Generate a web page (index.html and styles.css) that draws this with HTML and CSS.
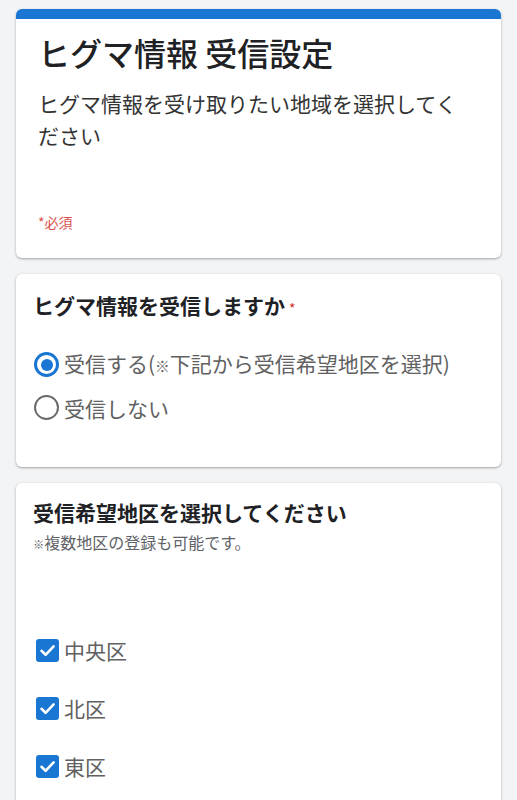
FILE: index.html
```html
<!DOCTYPE html>
<html lang="ja">
<head>
  <meta charset="UTF-8">
  <meta name="viewport" content="width=device-width, initial-scale=1.0">
  <title>ヒグマ情報 受信設定</title>
  <link rel="stylesheet" href="styles.css">
</head>
<body>
  <!-- Header card -->
  <div class="card card-head">
    <div class="head-bar"></div>
    <div class="head-body">
      <h1>ヒグマ情報 受信設定</h1>
      <p class="desc">ヒグマ情報を受け取りたい地域を選択してください</p>
      <p class="required-note">*必須</p>
    </div>
  </div>

  <!-- Receive yes / no -->
  <div class="card card-question">
    <h2>ヒグマ情報を受信しますか<span class="req">*</span></h2>
    <div class="options">
      <label class="radio-row">
        <span class="radio checked"></span>
        <span class="opt-text">受信する(<span class="mark">※</span>下記から受信希望地区を選択)</span>
      </label>
      <label class="radio-row">
        <span class="radio"></span>
        <span class="opt-text">受信しない</span>
      </label>
    </div>
  </div>

  <!-- Area selection -->
  <div class="card card-areas">
    <h2>受信希望地区を選択してください</h2>
    <p class="sub"><span class="mark">※</span>複数地区の登録も可能です。</p>
    <div class="checks">
      <label class="check-row">
        <svg class="check" viewBox="0 0 23 23" width="23" height="23"><rect width="23" height="23" rx="3" fill="#1976d2"/><polyline points="5.5,11.8 9.6,15.8 17.6,7.4" fill="none" stroke="#fff" stroke-width="2.6" stroke-linecap="round" stroke-linejoin="round"/></svg>
        <span class="opt-text">中央区</span>
      </label>
      <label class="check-row">
        <svg class="check" viewBox="0 0 23 23" width="23" height="23"><rect width="23" height="23" rx="3" fill="#1976d2"/><polyline points="5.5,11.8 9.6,15.8 17.6,7.4" fill="none" stroke="#fff" stroke-width="2.6" stroke-linecap="round" stroke-linejoin="round"/></svg>
        <span class="opt-text">北区</span>
      </label>
      <label class="check-row">
        <svg class="check" viewBox="0 0 23 23" width="23" height="23"><rect width="23" height="23" rx="3" fill="#1976d2"/><polyline points="5.5,11.8 9.6,15.8 17.6,7.4" fill="none" stroke="#fff" stroke-width="2.6" stroke-linecap="round" stroke-linejoin="round"/></svg>
        <span class="opt-text">東区</span>
      </label>
    </div>
  </div>
</body>
</html>
```

FILE: styles.css
```css
/* Global Styles */
* {
  margin: 0;
  padding: 0;
  box-sizing: border-box;
}

body {
  font-family: "Noto Sans CJK JP", "Noto Sans", sans-serif;
  background-color: #f3f4f6;
  color: #202124;
  padding: 9px 16px 20px;
}

.card {
  background: #fff;
  border-radius: 6px;
  box-shadow: 0 1px 3px rgba(0, 0, 0, 0.28), 0 1px 1px rgba(0, 0, 0, 0.08);
  margin-bottom: 16px;
  overflow: hidden;
}

/* Header card */
.head-bar {
  height: 10px;
  background-color: #1976d2;
}

.head-body {
  padding: 13px 26px 26px 22px;
}

h1 {
  font-size: 32px;
  font-weight: 500;
  line-height: 40px;
  color: #202124;
}

.desc {
  margin-top: 15px;
  font-size: 21px;
  line-height: 32px;
  color: #333;
}

.required-note {
  margin-top: 61px;
  font-size: 14px;
  line-height: 20px;
  color: #d9534f;
}

/* Question cards */
h2 {
  font-size: 21px;
  font-weight: 700;
  line-height: 30px;
  color: #202124;
}

.req {
  font-size: 14px;
  font-weight: 400;
  color: #d93025;
  margin-left: 4px;
}

.mark {
  font-size: 0.7em;
}

.card-question {
  padding: 16px 17px 38px;
}

.options {
  margin-top: 20px;
}

.radio-row {
  display: flex;
  align-items: center;
  height: 43px;
}

.radio {
  width: 25px;
  height: 25px;
  margin-left: 1px;
  border: 2.5px solid #6b6b6b;
  border-radius: 50%;
  display: flex;
  align-items: center;
  justify-content: center;
  flex-shrink: 0;
}

.radio.checked {
  border: 3px solid #1976d2;
}

.radio.checked::after {
  content: "";
  width: 12px;
  height: 12px;
  border-radius: 50%;
  background-color: #1976d2;
}

.opt-text {
  margin-left: 5px;
  font-size: 21px;
  line-height: 28px;
  color: #616161;
}

.card-areas {
  padding: 14px 17px 40px;
}

.sub {
  margin-top: 4px;
  font-size: 16px;
  line-height: 22px;
  color: #5f6368;
}

.checks {
  margin-top: 66px;
}

.check-row {
  display: flex;
  align-items: center;
  height: 58px;
  padding-left: 3px;
}

.check {
  flex-shrink: 0;
}
```
